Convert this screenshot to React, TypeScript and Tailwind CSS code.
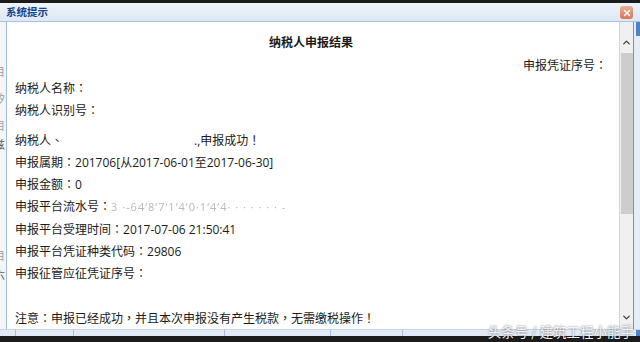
import { X, ChevronUp, ChevronDown } from "lucide-react";

const font = "font-['Open_Sans','Noto_Sans_CJK_SC',sans-serif]";

// full-width punctuation centred in its cell, as the reference's font draws it
function P({ c }: { c: string }) {
  return <span className="font-['Noto_Sans_CJK_TC',sans-serif]">{c}</span>;
}

function Row({ children, className = "" }: { children: React.ReactNode; className?: string }) {
  return <div className={`h-[22px] leading-[22px] whitespace-nowrap ${className}`}>{children}</div>;
}

export default function App() {
  return (
    <div className={`relative flex h-[342px] w-[640px] flex-col overflow-hidden bg-white text-[12px] text-[#1b1b1b] ${font}`}>
      <div className="h-[3px] bg-[#1c1c1c]" />

      {/* title bar */}
      <div className="flex h-[19px] items-center justify-between border-b border-[#a9c3e3] bg-gradient-to-b from-[#eef4fb] to-[#dde8f5] pl-[6px] pr-[7px]">
        <span className="font-['Noto_Sans_CJK_SC',sans-serif] text-[10.5px] font-bold leading-none text-[#15428b]">系统提示</span>
        <span className="mt-[1px] flex h-[13px] w-[13px] items-center justify-center rounded-[3px] bg-gradient-to-b from-[#eeb08f] to-[#d4765a]">
          <X className="h-[10px] w-[10px] text-white" strokeWidth={3.5} />
        </span>
      </div>

      {/* body */}
      <div className="flex min-h-0 flex-1">
        <div className="flex w-[7px] flex-col overflow-hidden border-r border-[#9fbbe0] bg-[#f4f5f7] text-[11px] leading-none text-[#9aa0a8]">
          <span className="-ml-[6px] mt-[44px]">目</span>
          <span className="-ml-[6px] mt-[16px]">矽</span>
          <span className="-ml-[6px] mt-[16px]">目</span>
          <span className="-ml-[6px] mt-[8px] text-[#555]">兹</span>
          <span className="-ml-[6px] mt-[100px]">目</span>
          <span className="-ml-[6px] mt-[8px] text-[#666]">六</span>
        </div>

        <div className="flex-1 pl-[8px] pr-[12px]">
          <div className="mt-[9px] h-[22px] text-center font-['Noto_Sans_CJK_SC',sans-serif] font-bold leading-[22px]">纳税人申报结果</div>
          <Row className="mt-[1px] text-right">申报凭证序号<P c="：" /></Row>
          <Row className="mt-[1px]">纳税人名称<P c="：" /></Row>
          <Row>纳税人识别号<P c="：" /></Row>
          <Row className="mt-[8px]">
            纳税人<P c="、" /><span className="inline-block w-[131px]" />.,申报成功<P c="！" />
          </Row>
          <Row>申报属期<P c="：" />201706[从2017-06-01至2017-06-30]</Row>
          <Row className="mt-[0.2px]">申报金额<P c="：" />0</Row>
          <Row className="mt-[0.2px]">
            申报平台流水号<P c="：" />
            <span className="text-[11px] tracking-[1px] text-[#b9b9b9] blur-[0.5px]">
              3 ·-64ʼ8ʼ7ʼ1ʼ4ʼ0·1ʼ4ʼ4·   ·  ·   ·   ·   ·  ·    -
            </span>
          </Row>
          <Row className="mt-[0.2px]">申报平台受理时间<P c="：" />2017-07-06 21:50:41</Row>
          <Row className="mt-[0.2px]">申报平台凭证种类代码<P c="：" />29806</Row>
          <Row className="mt-[0.2px]">申报征管应征凭证序号<P c="：" /></Row>
          <Row className="mt-[23px]">
            注意<P c="：" />申报已经成功<P c="，" />并且本次申报没有产生税款<P c="，" />无需缴税操作<P c="！" />
          </Row>
        </div>

        {/* scrollbar */}
        <div className="flex w-[14px] flex-col items-center border-l border-[#c9d7ea] bg-[#f0f0f0]">
          <ChevronUp className="mt-[15px] h-[11px] w-[11px] text-[#404040]" strokeWidth={3} />
          <div className="mt-[5px] h-[161px] w-[12px] bg-[#cdcdcd]" />
          <div className="flex-1" />
          <ChevronDown className="mb-[6px] h-[11px] w-[11px] text-[#404040]" strokeWidth={3} />
        </div>

        <div className="flex w-[7px] border-l border-[#6e94c8] bg-[#e7edf6]">
          <div className="ml-[2px] h-[14px] w-[4px] bg-[#4f83c4]" />
        </div>
      </div>

      {/* bottom rule */}
      <div className="flex h-[7px] border-t border-[#c2d3ea] bg-[#e2eaf5]">
        <div className="ml-[15px] w-[58px] border-l border-[#a7bcd8]" />
        <div className="w-[151px] border-l border-[#a7bcd8]" />
        <div className="w-[106px] border-l border-[#a7bcd8]" />
        <div className="w-[72px] border-l border-[#a7bcd8]" />
        <div className="flex-1 border-l border-[#a7bcd8]" />
        <div className="w-[4px] bg-[#4f83c4]" />
      </div>
      <div className="h-[6px] bg-[#1c1c1c]" />

      <div className="absolute bottom-[4px] right-[6px] whitespace-nowrap font-['Noto_Sans_CJK_SC',sans-serif] text-[13.5px] leading-none text-[#f4f4f4] [text-shadow:0_0_2px_rgba(0,0,0,0.6)]">
        头条号 / 建筑工程小能手
      </div>
    </div>
  );
}
